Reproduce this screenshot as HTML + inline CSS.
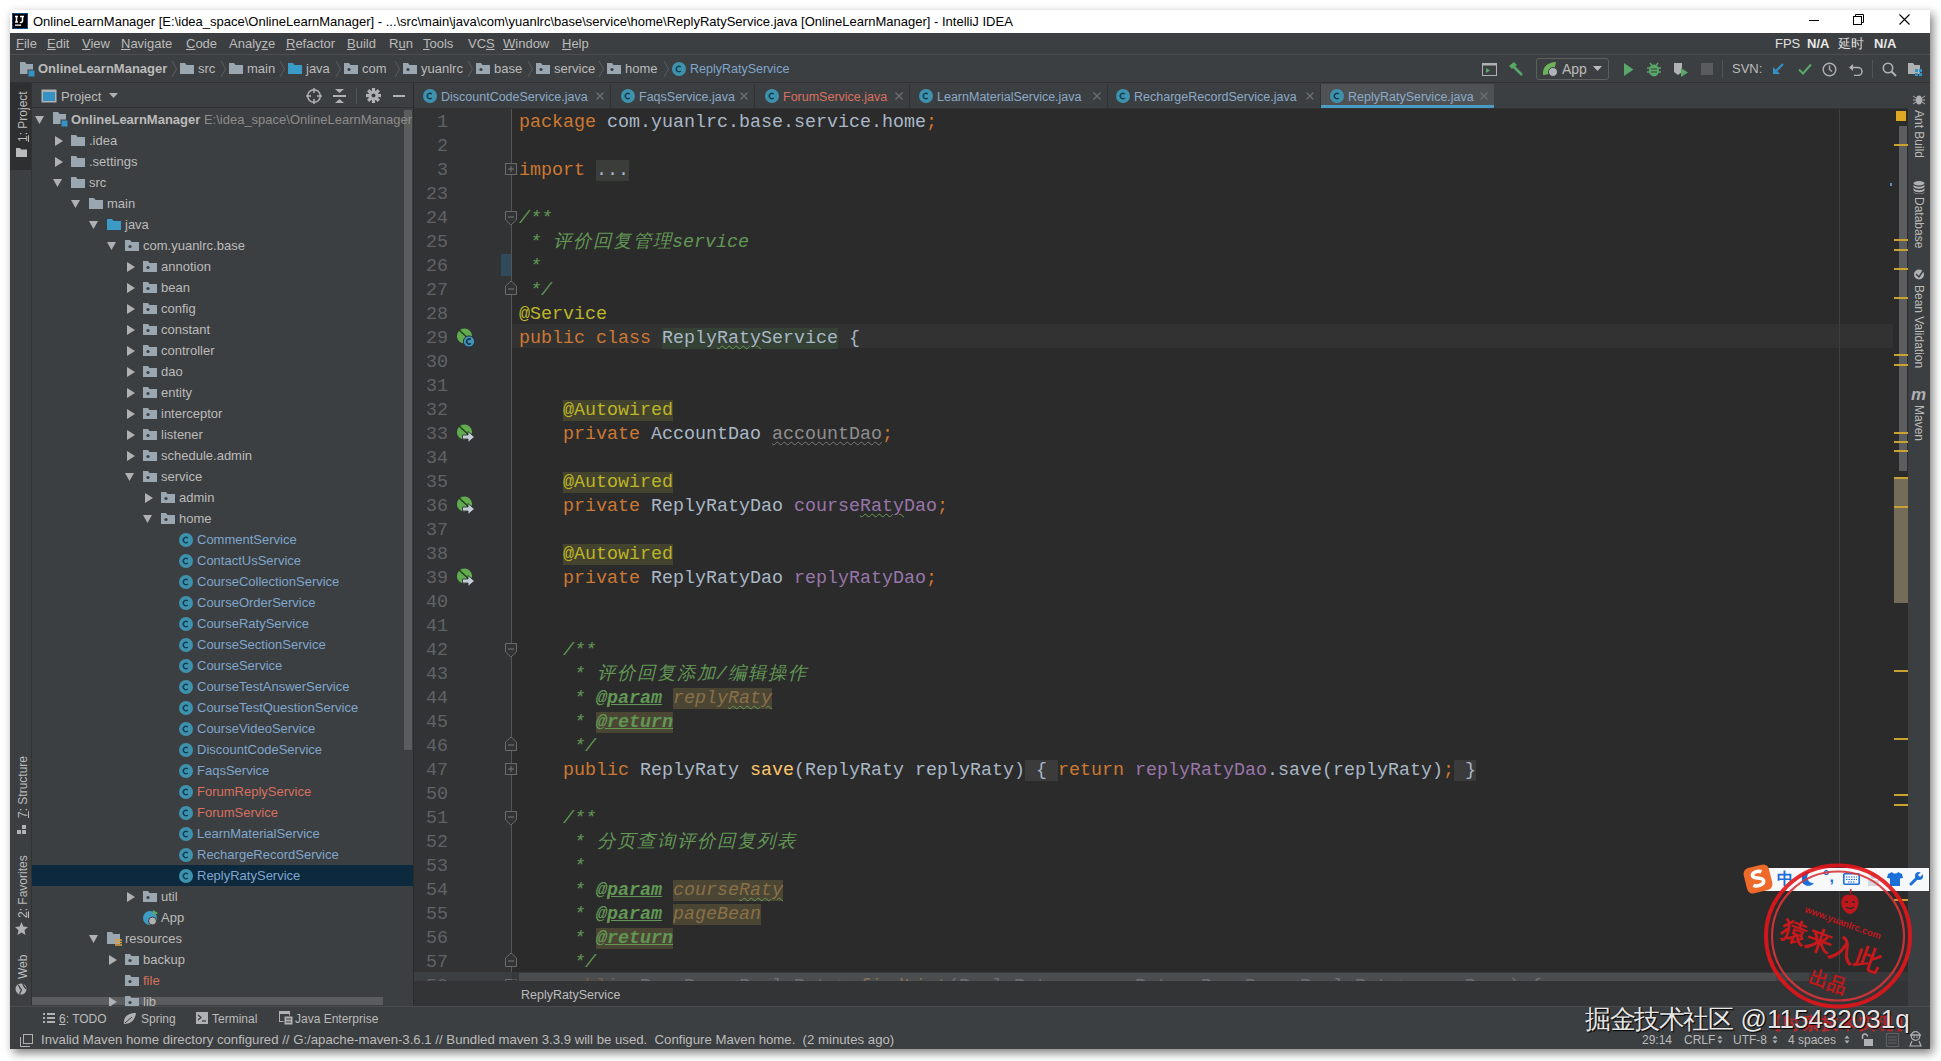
<!DOCTYPE html><html><head><meta charset="utf-8"><style>
*{margin:0;padding:0;box-sizing:border-box}
html,body{width:1941px;height:1061px;overflow:hidden;background:#fff;font-family:"Liberation Sans",sans-serif}
.a{position:absolute}
.t{position:absolute;white-space:pre;font-size:13px;line-height:16px;color:#bbbbbb}
.m{position:absolute;white-space:pre;font-family:"Liberation Mono",monospace;font-size:18.33px;line-height:24px;color:#a9b7c6}
.kw{color:#cc7832}.an{color:#bbb529}.fd{color:#9876aa}.dc{color:#629755;font-style:italic}.fn{color:#ffc66d}
.cj{display:inline-block;width:20px;text-align:center}
</style></head><body>
<div class="a" style="left:10px;top:10px;width:1920px;height:1039px;background:#3c3f41;box-shadow:3px 4px 9px rgba(0,0,0,0.5)"></div><div class="a" style="left:10px;top:10px;width:1920px;height:23px;background:#ffffff"></div><svg class="a" style="left:12px;top:13px" width="16" height="16"><rect x="0" y="0" width="16" height="16" fill="#0d4a8a"/><rect x="1" y="1" width="14" height="14" fill="#000"/><path d="M3 3.5H6M4.5 3.5V9M3 9H6M8 3.5H12M10.5 3.5V8A1.5 1.5 0 0 1 8 9" fill="none" stroke="#fff" stroke-width="1.5"/><rect x="3" y="11.5" width="6" height="1.3" fill="#fff"/></svg><div class="t" style="left:33px;top:14px;color:#000">OnlineLearnManager [E:\idea_space\OnlineLearnManager] - ...\src\main\java\com\yuanlrc\base\service\home\ReplyRatyService.java [OnlineLearnManager] - IntelliJ IDEA</div><div class="a" style="left:1809px;top:20px;width:10px;height:1px;background:#000"></div><svg class="a" style="left:1853px;top:14px" width="12" height="12"><rect x="0.5" y="2.5" width="8" height="8" fill="none" stroke="#000"/><path d="M2.5 2.5V0.5H10.5V8.5H8.5" fill="none" stroke="#000"/></svg><svg class="a" style="left:1899px;top:14px" width="12" height="12"><path d="M0.5 0.5L10.5 10.5M10.5 0.5L0.5 10.5" stroke="#000" stroke-width="1.1"/></svg><div class="a" style="left:10px;top:54px;width:1920px;height:1px;background:#4b4d4f"></div><div class="t" style="left:16px;top:36px"><u>F</u>ile</div><div class="t" style="left:47px;top:36px"><u>E</u>dit</div><div class="t" style="left:82px;top:36px"><u>V</u>iew</div><div class="t" style="left:121px;top:36px"><u>N</u>avigate</div><div class="t" style="left:186px;top:36px"><u>C</u>ode</div><div class="t" style="left:229px;top:36px">Analy<u>z</u>e</div><div class="t" style="left:286px;top:36px"><u>R</u>efactor</div><div class="t" style="left:347px;top:36px"><u>B</u>uild</div><div class="t" style="left:389px;top:36px">R<u>u</u>n</div><div class="t" style="left:423px;top:36px"><u>T</u>ools</div><div class="t" style="left:468px;top:36px">VC<u>S</u></div><div class="t" style="left:503px;top:36px"><u>W</u>indow</div><div class="t" style="left:562px;top:36px"><u>H</u>elp</div><div class="t" style="left:1775px;top:36px;color:#e0e0e0">FPS</div><div class="t" style="left:1807px;top:36px;color:#e8e8e8;font-weight:bold">N/A</div><div class="t" style="left:1838px;top:36px;color:#e0e0e0">延时</div><div class="t" style="left:1874px;top:36px;color:#e8e8e8;font-weight:bold">N/A</div><div class="a" style="left:10px;top:82px;width:1920px;height:1px;background:#323232"></div><svg class="a" style="left:20px;top:62px" width="16" height="15"><path d="M0 0H5L6.5 2H13V12H0Z" fill="#9aa7b0"/><rect x="8" y="8" width="7" height="7" fill="#3592c4" stroke="#3c3f41" stroke-width="1"/></svg><div class="t" style="left:38px;top:61px;font-weight:bold;color:#bbbbbb">OnlineLearnManager</div><svg class="a" style="left:171px;top:60px" width="7" height="18"><path d="M1 1L5.5 9L1 17" fill="none" stroke="#5a5d5f" stroke-width="1"/></svg><svg class="a" style="left:180px;top:63px" width="14" height="12"><path d="M0 0H5L6.5 2H14V11H0Z" fill="#9aa7b0"/></svg><div class="t" style="left:198px;top:61px">src</div><svg class="a" style="left:220px;top:60px" width="7" height="18"><path d="M1 1L5.5 9L1 17" fill="none" stroke="#5a5d5f" stroke-width="1"/></svg><svg class="a" style="left:229px;top:63px" width="14" height="12"><path d="M0 0H5L6.5 2H14V11H0Z" fill="#9aa7b0"/></svg><div class="t" style="left:247px;top:61px">main</div><svg class="a" style="left:279px;top:60px" width="7" height="18"><path d="M1 1L5.5 9L1 17" fill="none" stroke="#5a5d5f" stroke-width="1"/></svg><svg class="a" style="left:288px;top:63px" width="14" height="12"><path d="M0 0H5L6.5 2H14V11H0Z" fill="#3a9bc6"/></svg><div class="t" style="left:306px;top:61px">java</div><svg class="a" style="left:335px;top:60px" width="7" height="18"><path d="M1 1L5.5 9L1 17" fill="none" stroke="#5a5d5f" stroke-width="1"/></svg><svg class="a" style="left:344px;top:63px" width="14" height="12"><path d="M0 0H5L6.5 2H14V11H0Z" fill="#9aa7b0"/><circle cx="5" cy="6.5" r="1.6" fill="#3c3f41"/></svg><div class="t" style="left:362px;top:61px">com</div><svg class="a" style="left:394px;top:60px" width="7" height="18"><path d="M1 1L5.5 9L1 17" fill="none" stroke="#5a5d5f" stroke-width="1"/></svg><svg class="a" style="left:403px;top:63px" width="14" height="12"><path d="M0 0H5L6.5 2H14V11H0Z" fill="#9aa7b0"/><circle cx="5" cy="6.5" r="1.6" fill="#3c3f41"/></svg><div class="t" style="left:421px;top:61px">yuanlrc</div><svg class="a" style="left:467px;top:60px" width="7" height="18"><path d="M1 1L5.5 9L1 17" fill="none" stroke="#5a5d5f" stroke-width="1"/></svg><svg class="a" style="left:476px;top:63px" width="14" height="12"><path d="M0 0H5L6.5 2H14V11H0Z" fill="#9aa7b0"/><circle cx="5" cy="6.5" r="1.6" fill="#3c3f41"/></svg><div class="t" style="left:494px;top:61px">base</div><svg class="a" style="left:527px;top:60px" width="7" height="18"><path d="M1 1L5.5 9L1 17" fill="none" stroke="#5a5d5f" stroke-width="1"/></svg><svg class="a" style="left:536px;top:63px" width="14" height="12"><path d="M0 0H5L6.5 2H14V11H0Z" fill="#9aa7b0"/><circle cx="5" cy="6.5" r="1.6" fill="#3c3f41"/></svg><div class="t" style="left:554px;top:61px">service</div><svg class="a" style="left:598px;top:60px" width="7" height="18"><path d="M1 1L5.5 9L1 17" fill="none" stroke="#5a5d5f" stroke-width="1"/></svg><svg class="a" style="left:607px;top:63px" width="14" height="12"><path d="M0 0H5L6.5 2H14V11H0Z" fill="#9aa7b0"/><circle cx="5" cy="6.5" r="1.6" fill="#3c3f41"/></svg><div class="t" style="left:625px;top:61px">home</div><svg class="a" style="left:663px;top:60px" width="7" height="18"><path d="M1 1L5.5 9L1 17" fill="none" stroke="#5a5d5f" stroke-width="1"/></svg><svg class="a" style="left:672px;top:62px" width="14" height="14"><circle cx="7.0" cy="7.0" r="7.0" fill="#3f92ad"/><path d="M8.8 5.1A2.6 2.7 0 1 0 8.8 8.9" fill="none" stroke="#123f55" stroke-width="1.5"/></svg><div class="t" style="left:690px;top:61px;font-size:12.5px;color:#7fa6cc">ReplyRatyService</div><svg class="a" style="left:1482px;top:63px" width="15" height="13"><rect x="0.5" y="0.5" width="14" height="12" fill="none" stroke="#afb1b3"/><rect x="0.5" y="0.5" width="14" height="2" fill="#afb1b3"/><path d="M4 5L8 7.5L4 10Z" fill="#59a869"/></svg><svg class="a" style="left:1508px;top:62px" width="16" height="15"><path d="M1 4L6 0L9 3L4 7Z" fill="#59a869"/><path d="M6 5L14 13" stroke="#59a869" stroke-width="2.5"/></svg><div class="a" style="left:1536px;top:58px;width:73px;height:22px;border:1px solid #5e6060;border-radius:3px"></div><svg class="a" style="left:1542px;top:61px" width="20" height="16"><path d="M1 14C0 6 6 1 14 1C13 9 9 14 1 14Z" fill="#6db35a"/><circle cx="11" cy="11" r="4.5" fill="#aeb5b8" stroke="#3c3f41" stroke-width="1"/></svg><div class="t" style="left:1562px;top:61px;font-size:14px">App</div><svg class="a" style="left:1593px;top:66px" width="10" height="6"><path d="M0 0H9L4.5 5Z" fill="#bbbbbb"/></svg><svg class="a" style="left:1624px;top:63px" width="10" height="13"><path d="M0 0L9.5 6.5L0 13Z" fill="#59a869"/></svg><svg class="a" style="left:1647px;top:62px" width="14" height="15"><ellipse cx="7" cy="8.5" rx="5" ry="6" fill="#59a869"/><path d="M0 6H14M0 10H14M3 1L5 3.5M11 1L9 3.5" stroke="#59a869" stroke-width="1.5"/><path d="M4 7H10M4 10H10" stroke="#3c3f41" stroke-width="1.2"/></svg><svg class="a" style="left:1673px;top:62px" width="16" height="15"><path d="M1 1H9V10L5 13L1 10Z" fill="#afb1b3"/><path d="M8 6L15 10.5L8 15Z" fill="#59a869"/></svg><div class="a" style="left:1701px;top:63px;width:12px;height:12px;background:#595b5d"></div><div class="a" style="left:1722px;top:60px;width:1px;height:18px;background:#515354"></div><div class="t" style="left:1732px;top:61px">SVN:</div><svg class="a" style="left:1772px;top:63px" width="12" height="13"><path d="M11 1L3 9" stroke="#3592c4" stroke-width="2"/><path d="M1 4V11H8Z" fill="#3592c4"/></svg><svg class="a" style="left:1798px;top:63px" width="14" height="12"><path d="M1 6.5L5 10.5L13 1.5" fill="none" stroke="#59a869" stroke-width="2"/></svg><svg class="a" style="left:1822px;top:62px" width="15" height="15"><circle cx="7.5" cy="7.5" r="6.3" fill="none" stroke="#afb1b3" stroke-width="1.4"/><path d="M7.5 3.5V7.5L10 9.5" fill="none" stroke="#afb1b3" stroke-width="1.4"/></svg><svg class="a" style="left:1849px;top:62px" width="14" height="14"><path d="M3 5.5H9A4 4 0 0 1 9 13.5H5" fill="none" stroke="#afb1b3" stroke-width="1.5"/><path d="M0 5.5L4 2V9Z" fill="#afb1b3"/></svg><div class="a" style="left:1872px;top:60px;width:1px;height:18px;background:#515354"></div><svg class="a" style="left:1882px;top:62px" width="15" height="15"><circle cx="6" cy="6" r="4.7" fill="none" stroke="#afb1b3" stroke-width="1.6"/><path d="M9.5 9.5L14 14" stroke="#afb1b3" stroke-width="2"/></svg><svg class="a" style="left:1908px;top:63px" width="15" height="13"><path d="M0 0H5L6.5 2H12V11H0Z" fill="#afb1b3"/><rect x="7" y="6" width="3" height="3" fill="#3592c4"/><rect x="11" y="6" width="3" height="3" fill="#3592c4"/><rect x="7" y="10" width="3" height="3" fill="#3592c4"/><rect x="11" y="10" width="3" height="3" fill="#3592c4"/></svg><div class="a" style="left:10px;top:83px;width:21px;height:923px;background:#3c3f41"></div><div class="a" style="left:31px;top:83px;width:1px;height:923px;background:#323232"></div><div class="a" style="left:10px;top:83px;width:21px;height:87px;background:#2d2f30"></div><div class="t" style="left:16px;top:142px;font-size:12px;line-height:14px;color:#bbbbbb;transform-origin:0 0;transform:rotate(-90deg)"><u>1</u>: Project</div><svg class="a" style="left:16px;top:148px" width="11" height="9"><path d="M0 0H4L5 1.5H11V9H0Z" fill="#bbbbbb"/></svg><div class="t" style="left:16px;top:818px;font-size:12px;line-height:14px;color:#bbbbbb;transform-origin:0 0;transform:rotate(-90deg)"><u>7</u>: Structure</div><svg class="a" style="left:17px;top:825px" width="9" height="9"><rect x="0" y="5" width="4" height="4" fill="#afb1b3"/><rect x="5" y="5" width="4" height="4" fill="#afb1b3"/><rect x="5" y="0" width="4" height="4" fill="#afb1b3"/></svg><div class="t" style="left:16px;top:918px;font-size:12px;line-height:14px;color:#bbbbbb;transform-origin:0 0;transform:rotate(-90deg)"><u>2</u>: Favorites</div><svg class="a" style="left:15px;top:922px" width="13" height="13"><path d="M6.5 0L8.4 4.6L13 5L9.5 8.2L10.5 13L6.5 10.5L2.5 13L3.5 8.2L0 5L4.6 4.6Z" fill="#afb1b3"/></svg><div class="t" style="left:16px;top:979px;font-size:12px;line-height:14px;color:#bbbbbb;transform-origin:0 0;transform:rotate(-90deg)">Web</div><svg class="a" style="left:15px;top:983px" width="12" height="12"><circle cx="6" cy="6" r="5.5" fill="#afb1b3"/><path d="M3 2C5 3 4 5 6 6S4 9 5 11M8 1C8 3 10 4 11 6" stroke="#3c3f41" stroke-width="1.3" fill="none"/></svg><div class="a" style="left:32px;top:83px;width:381px;height:923px;background:#3c3f41"></div><div class="a" style="left:32px;top:107px;width:381px;height:1px;background:#323232"></div><svg class="a" style="left:41px;top:89px" width="16" height="14"><rect x="0.5" y="0.5" width="15" height="13" fill="#afb1b3"/><rect x="2" y="3" width="12" height="9" fill="#3592c4"/></svg><div class="t" style="left:61px;top:89px">Project</div><svg class="a" style="left:109px;top:93px" width="10" height="6"><path d="M0 0H9L4.5 5Z" fill="#afb1b3"/></svg><svg class="a" style="left:306px;top:88px" width="16" height="16"><circle cx="8" cy="8" r="6.3" fill="none" stroke="#afb1b3" stroke-width="1.5"/><path d="M8 0V5M8 11V16M0 8H5M11 8H16" stroke="#afb1b3" stroke-width="1.5"/></svg><svg class="a" style="left:333px;top:89px" width="13" height="14"><path d="M2 0H11L6.5 4Z M2 14H11L6.5 10Z" fill="#afb1b3"/><rect x="0" y="6" width="13" height="2" fill="#afb1b3"/></svg><div class="a" style="left:356px;top:88px;width:1px;height:16px;background:#515354"></div><svg class="a" style="left:366px;top:88px" width="15" height="15"><g transform="translate(7.5 7.5)"><circle r="5" fill="#afb1b3"/><rect x="-1.6" y="-7.5" width="3.2" height="4" fill="#afb1b3" transform="rotate(0)"/><rect x="-1.6" y="-7.5" width="3.2" height="4" fill="#afb1b3" transform="rotate(45)"/><rect x="-1.6" y="-7.5" width="3.2" height="4" fill="#afb1b3" transform="rotate(90)"/><rect x="-1.6" y="-7.5" width="3.2" height="4" fill="#afb1b3" transform="rotate(135)"/><rect x="-1.6" y="-7.5" width="3.2" height="4" fill="#afb1b3" transform="rotate(180)"/><rect x="-1.6" y="-7.5" width="3.2" height="4" fill="#afb1b3" transform="rotate(225)"/><rect x="-1.6" y="-7.5" width="3.2" height="4" fill="#afb1b3" transform="rotate(270)"/><rect x="-1.6" y="-7.5" width="3.2" height="4" fill="#afb1b3" transform="rotate(315)"/><circle r="2" fill="#3c3f41"/></g></svg><div class="a" style="left:393px;top:95px;width:12px;height:2px;background:#afb1b3"></div><div class="a" style="left:404px;top:110px;width:8px;height:640px;background:#5a5c5e;border-radius:1px"></div><div class="a" style="left:32px;top:997px;width:351px;height:8px;background:#5a5c5e"></div><svg class="a" style="left:35px;top:116px" width="10" height="9"><path d="M0 0H9L4.5 8Z" fill="#afb1b3"/></svg><svg class="a" style="left:53px;top:112px" width="16" height="15"><path d="M0 0H5L6.5 2H13V12H0Z" fill="#9aa7b0"/><rect x="8" y="8" width="7" height="7" fill="#3592c4" stroke="#3c3f41" stroke-width="1"/></svg><div class="t" style="left:71px;top:112px;font-weight:bold">OnlineLearnManager <span style="font-weight:normal;color:#8c8c8c">E:\idea_space\OnlineLearnManager</span></div><svg class="a" style="left:55px;top:136px" width="9" height="10"><path d="M0 0V10L8 5Z" fill="#afb1b3"/></svg><svg class="a" style="left:71px;top:135px" width="14" height="12"><path d="M0 0H5L6.5 2H14V11H0Z" fill="#9aa7b0"/></svg><div class="t" style="left:89px;top:133px;color:#bbbbbb">.idea</div><svg class="a" style="left:55px;top:157px" width="9" height="10"><path d="M0 0V10L8 5Z" fill="#afb1b3"/></svg><svg class="a" style="left:71px;top:156px" width="14" height="12"><path d="M0 0H5L6.5 2H14V11H0Z" fill="#9aa7b0"/></svg><div class="t" style="left:89px;top:154px;color:#bbbbbb">.settings</div><svg class="a" style="left:53px;top:179px" width="10" height="9"><path d="M0 0H9L4.5 8Z" fill="#afb1b3"/></svg><svg class="a" style="left:71px;top:177px" width="14" height="12"><path d="M0 0H5L6.5 2H14V11H0Z" fill="#9aa7b0"/></svg><div class="t" style="left:89px;top:175px;color:#bbbbbb">src</div><svg class="a" style="left:71px;top:200px" width="10" height="9"><path d="M0 0H9L4.5 8Z" fill="#afb1b3"/></svg><svg class="a" style="left:89px;top:198px" width="14" height="12"><path d="M0 0H5L6.5 2H14V11H0Z" fill="#9aa7b0"/></svg><div class="t" style="left:107px;top:196px;color:#bbbbbb">main</div><svg class="a" style="left:89px;top:221px" width="10" height="9"><path d="M0 0H9L4.5 8Z" fill="#afb1b3"/></svg><svg class="a" style="left:107px;top:219px" width="14" height="12"><path d="M0 0H5L6.5 2H14V11H0Z" fill="#3a9bc6"/></svg><div class="t" style="left:125px;top:217px;color:#bbbbbb">java</div><svg class="a" style="left:107px;top:242px" width="10" height="9"><path d="M0 0H9L4.5 8Z" fill="#afb1b3"/></svg><svg class="a" style="left:125px;top:240px" width="14" height="12"><path d="M0 0H5L6.5 2H14V11H0Z" fill="#9aa7b0"/><circle cx="5" cy="6.5" r="1.6" fill="#3c3f41"/></svg><div class="t" style="left:143px;top:238px;color:#bbbbbb">com.yuanlrc.base</div><svg class="a" style="left:127px;top:262px" width="9" height="10"><path d="M0 0V10L8 5Z" fill="#afb1b3"/></svg><svg class="a" style="left:143px;top:261px" width="14" height="12"><path d="M0 0H5L6.5 2H14V11H0Z" fill="#9aa7b0"/><circle cx="5" cy="6.5" r="1.6" fill="#3c3f41"/></svg><div class="t" style="left:161px;top:259px;color:#bbbbbb">annotion</div><svg class="a" style="left:127px;top:283px" width="9" height="10"><path d="M0 0V10L8 5Z" fill="#afb1b3"/></svg><svg class="a" style="left:143px;top:282px" width="14" height="12"><path d="M0 0H5L6.5 2H14V11H0Z" fill="#9aa7b0"/><circle cx="5" cy="6.5" r="1.6" fill="#3c3f41"/></svg><div class="t" style="left:161px;top:280px;color:#bbbbbb">bean</div><svg class="a" style="left:127px;top:304px" width="9" height="10"><path d="M0 0V10L8 5Z" fill="#afb1b3"/></svg><svg class="a" style="left:143px;top:303px" width="14" height="12"><path d="M0 0H5L6.5 2H14V11H0Z" fill="#9aa7b0"/><circle cx="5" cy="6.5" r="1.6" fill="#3c3f41"/></svg><div class="t" style="left:161px;top:301px;color:#bbbbbb">config</div><svg class="a" style="left:127px;top:325px" width="9" height="10"><path d="M0 0V10L8 5Z" fill="#afb1b3"/></svg><svg class="a" style="left:143px;top:324px" width="14" height="12"><path d="M0 0H5L6.5 2H14V11H0Z" fill="#9aa7b0"/><circle cx="5" cy="6.5" r="1.6" fill="#3c3f41"/></svg><div class="t" style="left:161px;top:322px;color:#bbbbbb">constant</div><svg class="a" style="left:127px;top:346px" width="9" height="10"><path d="M0 0V10L8 5Z" fill="#afb1b3"/></svg><svg class="a" style="left:143px;top:345px" width="14" height="12"><path d="M0 0H5L6.5 2H14V11H0Z" fill="#9aa7b0"/><circle cx="5" cy="6.5" r="1.6" fill="#3c3f41"/></svg><div class="t" style="left:161px;top:343px;color:#bbbbbb">controller</div><svg class="a" style="left:127px;top:367px" width="9" height="10"><path d="M0 0V10L8 5Z" fill="#afb1b3"/></svg><svg class="a" style="left:143px;top:366px" width="14" height="12"><path d="M0 0H5L6.5 2H14V11H0Z" fill="#9aa7b0"/><circle cx="5" cy="6.5" r="1.6" fill="#3c3f41"/></svg><div class="t" style="left:161px;top:364px;color:#bbbbbb">dao</div><svg class="a" style="left:127px;top:388px" width="9" height="10"><path d="M0 0V10L8 5Z" fill="#afb1b3"/></svg><svg class="a" style="left:143px;top:387px" width="14" height="12"><path d="M0 0H5L6.5 2H14V11H0Z" fill="#9aa7b0"/><circle cx="5" cy="6.5" r="1.6" fill="#3c3f41"/></svg><div class="t" style="left:161px;top:385px;color:#bbbbbb">entity</div><svg class="a" style="left:127px;top:409px" width="9" height="10"><path d="M0 0V10L8 5Z" fill="#afb1b3"/></svg><svg class="a" style="left:143px;top:408px" width="14" height="12"><path d="M0 0H5L6.5 2H14V11H0Z" fill="#9aa7b0"/><circle cx="5" cy="6.5" r="1.6" fill="#3c3f41"/></svg><div class="t" style="left:161px;top:406px;color:#bbbbbb">interceptor</div><svg class="a" style="left:127px;top:430px" width="9" height="10"><path d="M0 0V10L8 5Z" fill="#afb1b3"/></svg><svg class="a" style="left:143px;top:429px" width="14" height="12"><path d="M0 0H5L6.5 2H14V11H0Z" fill="#9aa7b0"/><circle cx="5" cy="6.5" r="1.6" fill="#3c3f41"/></svg><div class="t" style="left:161px;top:427px;color:#bbbbbb">listener</div><svg class="a" style="left:127px;top:451px" width="9" height="10"><path d="M0 0V10L8 5Z" fill="#afb1b3"/></svg><svg class="a" style="left:143px;top:450px" width="14" height="12"><path d="M0 0H5L6.5 2H14V11H0Z" fill="#9aa7b0"/><circle cx="5" cy="6.5" r="1.6" fill="#3c3f41"/></svg><div class="t" style="left:161px;top:448px;color:#bbbbbb">schedule.admin</div><svg class="a" style="left:125px;top:473px" width="10" height="9"><path d="M0 0H9L4.5 8Z" fill="#afb1b3"/></svg><svg class="a" style="left:143px;top:471px" width="14" height="12"><path d="M0 0H5L6.5 2H14V11H0Z" fill="#9aa7b0"/><circle cx="5" cy="6.5" r="1.6" fill="#3c3f41"/></svg><div class="t" style="left:161px;top:469px;color:#bbbbbb">service</div><svg class="a" style="left:145px;top:493px" width="9" height="10"><path d="M0 0V10L8 5Z" fill="#afb1b3"/></svg><svg class="a" style="left:161px;top:492px" width="14" height="12"><path d="M0 0H5L6.5 2H14V11H0Z" fill="#9aa7b0"/><circle cx="5" cy="6.5" r="1.6" fill="#3c3f41"/></svg><div class="t" style="left:179px;top:490px;color:#bbbbbb">admin</div><svg class="a" style="left:143px;top:515px" width="10" height="9"><path d="M0 0H9L4.5 8Z" fill="#afb1b3"/></svg><svg class="a" style="left:161px;top:513px" width="14" height="12"><path d="M0 0H5L6.5 2H14V11H0Z" fill="#9aa7b0"/><circle cx="5" cy="6.5" r="1.6" fill="#3c3f41"/></svg><div class="t" style="left:179px;top:511px;color:#bbbbbb">home</div><svg class="a" style="left:179px;top:533px" width="14" height="14"><circle cx="7.0" cy="7.0" r="7.0" fill="#3f92ad"/><path d="M8.8 5.1A2.6 2.7 0 1 0 8.8 8.9" fill="none" stroke="#123f55" stroke-width="1.5"/></svg><div class="t" style="left:197px;top:532px;color:#7fa6cc">CommentService</div><svg class="a" style="left:179px;top:554px" width="14" height="14"><circle cx="7.0" cy="7.0" r="7.0" fill="#3f92ad"/><path d="M8.8 5.1A2.6 2.7 0 1 0 8.8 8.9" fill="none" stroke="#123f55" stroke-width="1.5"/></svg><div class="t" style="left:197px;top:553px;color:#7fa6cc">ContactUsService</div><svg class="a" style="left:179px;top:575px" width="14" height="14"><circle cx="7.0" cy="7.0" r="7.0" fill="#3f92ad"/><path d="M8.8 5.1A2.6 2.7 0 1 0 8.8 8.9" fill="none" stroke="#123f55" stroke-width="1.5"/></svg><div class="t" style="left:197px;top:574px;color:#7fa6cc">CourseCollectionService</div><svg class="a" style="left:179px;top:596px" width="14" height="14"><circle cx="7.0" cy="7.0" r="7.0" fill="#3f92ad"/><path d="M8.8 5.1A2.6 2.7 0 1 0 8.8 8.9" fill="none" stroke="#123f55" stroke-width="1.5"/></svg><div class="t" style="left:197px;top:595px;color:#7fa6cc">CourseOrderService</div><svg class="a" style="left:179px;top:617px" width="14" height="14"><circle cx="7.0" cy="7.0" r="7.0" fill="#3f92ad"/><path d="M8.8 5.1A2.6 2.7 0 1 0 8.8 8.9" fill="none" stroke="#123f55" stroke-width="1.5"/></svg><div class="t" style="left:197px;top:616px;color:#7fa6cc">CourseRatyService</div><svg class="a" style="left:179px;top:638px" width="14" height="14"><circle cx="7.0" cy="7.0" r="7.0" fill="#3f92ad"/><path d="M8.8 5.1A2.6 2.7 0 1 0 8.8 8.9" fill="none" stroke="#123f55" stroke-width="1.5"/></svg><div class="t" style="left:197px;top:637px;color:#7fa6cc">CourseSectionService</div><svg class="a" style="left:179px;top:659px" width="14" height="14"><circle cx="7.0" cy="7.0" r="7.0" fill="#3f92ad"/><path d="M8.8 5.1A2.6 2.7 0 1 0 8.8 8.9" fill="none" stroke="#123f55" stroke-width="1.5"/></svg><div class="t" style="left:197px;top:658px;color:#7fa6cc">CourseService</div><svg class="a" style="left:179px;top:680px" width="14" height="14"><circle cx="7.0" cy="7.0" r="7.0" fill="#3f92ad"/><path d="M8.8 5.1A2.6 2.7 0 1 0 8.8 8.9" fill="none" stroke="#123f55" stroke-width="1.5"/></svg><div class="t" style="left:197px;top:679px;color:#7fa6cc">CourseTestAnswerService</div><svg class="a" style="left:179px;top:701px" width="14" height="14"><circle cx="7.0" cy="7.0" r="7.0" fill="#3f92ad"/><path d="M8.8 5.1A2.6 2.7 0 1 0 8.8 8.9" fill="none" stroke="#123f55" stroke-width="1.5"/></svg><div class="t" style="left:197px;top:700px;color:#7fa6cc">CourseTestQuestionService</div><svg class="a" style="left:179px;top:722px" width="14" height="14"><circle cx="7.0" cy="7.0" r="7.0" fill="#3f92ad"/><path d="M8.8 5.1A2.6 2.7 0 1 0 8.8 8.9" fill="none" stroke="#123f55" stroke-width="1.5"/></svg><div class="t" style="left:197px;top:721px;color:#7fa6cc">CourseVideoService</div><svg class="a" style="left:179px;top:743px" width="14" height="14"><circle cx="7.0" cy="7.0" r="7.0" fill="#3f92ad"/><path d="M8.8 5.1A2.6 2.7 0 1 0 8.8 8.9" fill="none" stroke="#123f55" stroke-width="1.5"/></svg><div class="t" style="left:197px;top:742px;color:#7fa6cc">DiscountCodeService</div><svg class="a" style="left:179px;top:764px" width="14" height="14"><circle cx="7.0" cy="7.0" r="7.0" fill="#3f92ad"/><path d="M8.8 5.1A2.6 2.7 0 1 0 8.8 8.9" fill="none" stroke="#123f55" stroke-width="1.5"/></svg><div class="t" style="left:197px;top:763px;color:#7fa6cc">FaqsService</div><svg class="a" style="left:179px;top:785px" width="14" height="14"><circle cx="7.0" cy="7.0" r="7.0" fill="#3f92ad"/><path d="M8.8 5.1A2.6 2.7 0 1 0 8.8 8.9" fill="none" stroke="#123f55" stroke-width="1.5"/></svg><div class="t" style="left:197px;top:784px;color:#d8705f">ForumReplyService</div><svg class="a" style="left:179px;top:806px" width="14" height="14"><circle cx="7.0" cy="7.0" r="7.0" fill="#3f92ad"/><path d="M8.8 5.1A2.6 2.7 0 1 0 8.8 8.9" fill="none" stroke="#123f55" stroke-width="1.5"/></svg><div class="t" style="left:197px;top:805px;color:#d8705f">ForumService</div><svg class="a" style="left:179px;top:827px" width="14" height="14"><circle cx="7.0" cy="7.0" r="7.0" fill="#3f92ad"/><path d="M8.8 5.1A2.6 2.7 0 1 0 8.8 8.9" fill="none" stroke="#123f55" stroke-width="1.5"/></svg><div class="t" style="left:197px;top:826px;color:#7fa6cc">LearnMaterialService</div><svg class="a" style="left:179px;top:848px" width="14" height="14"><circle cx="7.0" cy="7.0" r="7.0" fill="#3f92ad"/><path d="M8.8 5.1A2.6 2.7 0 1 0 8.8 8.9" fill="none" stroke="#123f55" stroke-width="1.5"/></svg><div class="t" style="left:197px;top:847px;color:#7fa6cc">RechargeRecordService</div><div class="a" style="left:32px;top:864.5px;width:381px;height:21px;background:#0d293e"></div><svg class="a" style="left:179px;top:869px" width="14" height="14"><circle cx="7.0" cy="7.0" r="7.0" fill="#3f92ad"/><path d="M8.8 5.1A2.6 2.7 0 1 0 8.8 8.9" fill="none" stroke="#123f55" stroke-width="1.5"/></svg><div class="t" style="left:197px;top:868px;color:#7fa6cc">ReplyRatyService</div><svg class="a" style="left:127px;top:892px" width="9" height="10"><path d="M0 0V10L8 5Z" fill="#afb1b3"/></svg><svg class="a" style="left:143px;top:891px" width="14" height="12"><path d="M0 0H5L6.5 2H14V11H0Z" fill="#9aa7b0"/><circle cx="5" cy="6.5" r="1.6" fill="#3c3f41"/></svg><div class="t" style="left:161px;top:889px;color:#bbbbbb">util</div><svg class="a" style="left:143px;top:910px" width="16" height="16"><circle cx="7" cy="8" r="7" fill="#3d9bc4"/><path d="M10 0L15 3L10 6Z" fill="#59a869"/><circle cx="9.5" cy="11" r="4" fill="#afb1b3" stroke="#3c3f41"/></svg><div class="t" style="left:161px;top:910px;color:#bbbbbb">App</div><svg class="a" style="left:89px;top:935px" width="10" height="9"><path d="M0 0H9L4.5 8Z" fill="#afb1b3"/></svg><svg class="a" style="left:107px;top:932px" width="16" height="15"><path d="M0 0H5L6.5 2H13V12H0Z" fill="#9aa7b0"/><path d="M8 8H15M8 10.5H15M8 13H15" stroke="#d9a343" stroke-width="1.5"/></svg><div class="t" style="left:125px;top:931px;color:#bbbbbb">resources</div><svg class="a" style="left:109px;top:955px" width="9" height="10"><path d="M0 0V10L8 5Z" fill="#afb1b3"/></svg><svg class="a" style="left:125px;top:954px" width="14" height="12"><path d="M0 0H5L6.5 2H14V11H0Z" fill="#9aa7b0"/><circle cx="5" cy="6.5" r="1.6" fill="#3c3f41"/></svg><div class="t" style="left:143px;top:952px;color:#bbbbbb">backup</div><svg class="a" style="left:125px;top:975px" width="14" height="12"><path d="M0 0H5L6.5 2H14V11H0Z" fill="#9aa7b0"/><circle cx="5" cy="6.5" r="1.6" fill="#3c3f41"/></svg><div class="t" style="left:143px;top:973px;color:#d8705f">file</div><svg class="a" style="left:109px;top:997px" width="9" height="10"><path d="M0 0V10L8 5Z" fill="#afb1b3"/></svg><svg class="a" style="left:125px;top:996px" width="14" height="12"><path d="M0 0H5L6.5 2H14V11H0Z" fill="#9aa7b0"/><circle cx="5" cy="6.5" r="1.6" fill="#3c3f41"/></svg><div class="t" style="left:143px;top:994px;color:#bbbbbb">lib</div><div class="a" style="left:413px;top:83px;width:1495px;height:26px;background:#3c3f41"></div><div class="a" style="left:413px;top:83px;width:1px;height:923px;background:#2b2b2b"></div><div class="a" style="left:413px;top:108px;width:1495px;height:1px;background:#323232"></div><svg class="a" style="left:423px;top:89px" width="14" height="14"><circle cx="7.0" cy="7.0" r="7.0" fill="#3f92ad"/><path d="M8.8 5.1A2.6 2.7 0 1 0 8.8 8.9" fill="none" stroke="#123f55" stroke-width="1.5"/></svg><div class="t" style="left:441px;top:89px;font-size:12.5px;color:#8aaac8">DiscountCodeService.java</div><svg class="a" style="left:596px;top:92px" width="8" height="8"><path d="M0.5 0.5L7.5 7.5M7.5 0.5L0.5 7.5" stroke="#6e7072" stroke-width="1.2"/></svg><div class="a" style="left:610px;top:84px;width:1px;height:24px;background:#323232"></div><svg class="a" style="left:621px;top:89px" width="14" height="14"><circle cx="7.0" cy="7.0" r="7.0" fill="#3f92ad"/><path d="M8.8 5.1A2.6 2.7 0 1 0 8.8 8.9" fill="none" stroke="#123f55" stroke-width="1.5"/></svg><div class="t" style="left:639px;top:89px;font-size:12.5px;color:#8aaac8">FaqsService.java</div><svg class="a" style="left:740px;top:92px" width="8" height="8"><path d="M0.5 0.5L7.5 7.5M7.5 0.5L0.5 7.5" stroke="#6e7072" stroke-width="1.2"/></svg><div class="a" style="left:754px;top:84px;width:1px;height:24px;background:#323232"></div><svg class="a" style="left:765px;top:89px" width="14" height="14"><circle cx="7.0" cy="7.0" r="7.0" fill="#3f92ad"/><path d="M8.8 5.1A2.6 2.7 0 1 0 8.8 8.9" fill="none" stroke="#123f55" stroke-width="1.5"/></svg><div class="t" style="left:783px;top:89px;font-size:12.5px;color:#d8705f">ForumService.java</div><svg class="a" style="left:895px;top:92px" width="8" height="8"><path d="M0.5 0.5L7.5 7.5M7.5 0.5L0.5 7.5" stroke="#6e7072" stroke-width="1.2"/></svg><div class="a" style="left:909px;top:84px;width:1px;height:24px;background:#323232"></div><svg class="a" style="left:919px;top:89px" width="14" height="14"><circle cx="7.0" cy="7.0" r="7.0" fill="#3f92ad"/><path d="M8.8 5.1A2.6 2.7 0 1 0 8.8 8.9" fill="none" stroke="#123f55" stroke-width="1.5"/></svg><div class="t" style="left:937px;top:89px;font-size:12.5px;color:#8aaac8">LearnMaterialService.java</div><svg class="a" style="left:1093px;top:92px" width="8" height="8"><path d="M0.5 0.5L7.5 7.5M7.5 0.5L0.5 7.5" stroke="#6e7072" stroke-width="1.2"/></svg><div class="a" style="left:1107px;top:84px;width:1px;height:24px;background:#323232"></div><svg class="a" style="left:1116px;top:89px" width="14" height="14"><circle cx="7.0" cy="7.0" r="7.0" fill="#3f92ad"/><path d="M8.8 5.1A2.6 2.7 0 1 0 8.8 8.9" fill="none" stroke="#123f55" stroke-width="1.5"/></svg><div class="t" style="left:1134px;top:89px;font-size:12.5px;color:#8aaac8">RechargeRecordService.java</div><svg class="a" style="left:1306px;top:92px" width="8" height="8"><path d="M0.5 0.5L7.5 7.5M7.5 0.5L0.5 7.5" stroke="#6e7072" stroke-width="1.2"/></svg><div class="a" style="left:1320px;top:84px;width:1px;height:24px;background:#323232"></div><div class="a" style="left:1321px;top:84px;width:173px;height:24px;background:#4e5254"></div><div class="a" style="left:1321px;top:105px;width:173px;height:3px;background:#4a9ac4"></div><svg class="a" style="left:1330px;top:89px" width="14" height="14"><circle cx="7.0" cy="7.0" r="7.0" fill="#3f92ad"/><path d="M8.8 5.1A2.6 2.7 0 1 0 8.8 8.9" fill="none" stroke="#123f55" stroke-width="1.5"/></svg><div class="t" style="left:1348px;top:89px;font-size:12.5px;color:#8aaac8">ReplyRatyService.java</div><svg class="a" style="left:1480px;top:92px" width="8" height="8"><path d="M0.5 0.5L7.5 7.5M7.5 0.5L0.5 7.5" stroke="#6e7072" stroke-width="1.2"/></svg><div class="a" style="left:414px;top:109px;width:97px;height:863px;background:#313335"></div><div class="a" style="left:511px;top:109px;width:1px;height:863px;background:#555555"></div><div class="a" style="left:512px;top:109px;width:1396px;height:863px;background:#2b2b2b"></div><div class="a" style="left:512px;top:324px;width:1381px;height:24px;background:#323232"></div><div class="a" style="left:1839px;top:109px;width:1px;height:863px;background:#3f3f3f"></div><div class="a" style="left:414px;top:109px;width:1494px;height:872px;overflow:hidden"><div class="m" style="left:0px;top:2px;width:34px;text-align:right;color:#606366">1</div><div class="m" style="left:105px;top:2px"><span class="kw">package</span> com.yuanlrc.base.service.home<span class="kw">;</span></div><div class="m" style="left:0px;top:26px;width:34px;text-align:right;color:#606366">2</div><div class="m" style="left:0px;top:50px;width:34px;text-align:right;color:#606366">3</div><div class="m" style="left:105px;top:50px"><span class="kw">import</span> <span style="background:#3b3d3b;color:#a9b7c6">...</span></div><div class="m" style="left:0px;top:74px;width:34px;text-align:right;color:#606366">23</div><div class="m" style="left:0px;top:98px;width:34px;text-align:right;color:#606366">24</div><div class="m" style="left:105px;top:98px"><span class="dc">/**</span></div><div class="m" style="left:0px;top:122px;width:34px;text-align:right;color:#606366">25</div><div class="m" style="left:105px;top:122px"><span class="dc"> * </span><span class="dc"><span class="cj">评</span><span class="cj">价</span><span class="cj">回</span><span class="cj">复</span><span class="cj">管</span><span class="cj">理</span></span><span class="dc">service</span></div><div class="m" style="left:0px;top:146px;width:34px;text-align:right;color:#606366">26</div><div class="m" style="left:105px;top:146px"><span class="dc"> *</span></div><div class="m" style="left:0px;top:170px;width:34px;text-align:right;color:#606366">27</div><div class="m" style="left:105px;top:170px"><span class="dc"> */</span></div><div class="m" style="left:0px;top:194px;width:34px;text-align:right;color:#606366">28</div><div class="m" style="left:105px;top:194px"><span class="an">@Service</span></div><div class="m" style="left:0px;top:218px;width:34px;text-align:right;color:#606366">29</div><div class="m" style="left:105px;top:218px"><span class="kw">public class </span><span style="background:#344134">Reply<span style="text-decoration:underline wavy #6a9a55;text-decoration-thickness:1px;text-underline-offset:2px">Raty</span>Service</span> {</div><div class="m" style="left:0px;top:242px;width:34px;text-align:right;color:#606366">30</div><div class="m" style="left:0px;top:266px;width:34px;text-align:right;color:#606366">31</div><div class="m" style="left:0px;top:290px;width:34px;text-align:right;color:#606366">32</div><div class="m" style="left:105px;top:290px">    <span class="an" style="background:#44432d">@Autowired</span></div><div class="m" style="left:0px;top:314px;width:34px;text-align:right;color:#606366">33</div><div class="m" style="left:105px;top:314px">    <span class="kw">private </span>AccountDao <span style="color:#8e8e8e;text-decoration:underline wavy #7a7a7a;text-decoration-thickness:1px;text-underline-offset:2px">accountDao</span><span class="kw">;</span></div><div class="m" style="left:0px;top:338px;width:34px;text-align:right;color:#606366">34</div><div class="m" style="left:0px;top:362px;width:34px;text-align:right;color:#606366">35</div><div class="m" style="left:105px;top:362px">    <span class="an" style="background:#44432d">@Autowired</span></div><div class="m" style="left:0px;top:386px;width:34px;text-align:right;color:#606366">36</div><div class="m" style="left:105px;top:386px">    <span class="kw">private </span>ReplyRatyDao <span class="fd">course<span style="text-decoration:underline wavy #6a9a55;text-decoration-thickness:1px;text-underline-offset:2px">Raty</span>Dao</span><span class="kw">;</span></div><div class="m" style="left:0px;top:410px;width:34px;text-align:right;color:#606366">37</div><div class="m" style="left:0px;top:434px;width:34px;text-align:right;color:#606366">38</div><div class="m" style="left:105px;top:434px">    <span class="an" style="background:#44432d">@Autowired</span></div><div class="m" style="left:0px;top:458px;width:34px;text-align:right;color:#606366">39</div><div class="m" style="left:105px;top:458px">    <span class="kw">private </span>ReplyRatyDao <span class="fd">replyRatyDao</span><span class="kw">;</span></div><div class="m" style="left:0px;top:482px;width:34px;text-align:right;color:#606366">40</div><div class="m" style="left:0px;top:506px;width:34px;text-align:right;color:#606366">41</div><div class="m" style="left:0px;top:530px;width:34px;text-align:right;color:#606366">42</div><div class="m" style="left:105px;top:530px">    <span class="dc">/**</span></div><div class="m" style="left:0px;top:554px;width:34px;text-align:right;color:#606366">43</div><div class="m" style="left:105px;top:554px">    <span class="dc"> * </span><span class="dc"><span class="cj">评</span><span class="cj">价</span><span class="cj">回</span><span class="cj">复</span><span class="cj">添</span><span class="cj">加</span></span><span class="dc">/</span><span class="dc"><span class="cj">编</span><span class="cj">辑</span><span class="cj">操</span><span class="cj">作</span></span></div><div class="m" style="left:0px;top:578px;width:34px;text-align:right;color:#606366">44</div><div class="m" style="left:105px;top:578px">    <span class="dc"> * </span><span class="dc" style="font-weight:bold;text-decoration:underline">@param</span><span class="dc"> </span><span style="font-style:italic;color:#8a7048;background:#4b4634">reply<span style="text-decoration:underline wavy #6a9a55;text-decoration-thickness:1px;text-underline-offset:2px">Raty</span></span></div><div class="m" style="left:0px;top:602px;width:34px;text-align:right;color:#606366">45</div><div class="m" style="left:105px;top:602px">    <span class="dc"> * </span><span class="dc" style="font-weight:bold;text-decoration:underline;background:#4b4634">@return</span></div><div class="m" style="left:0px;top:626px;width:34px;text-align:right;color:#606366">46</div><div class="m" style="left:105px;top:626px">    <span class="dc"> */</span></div><div class="m" style="left:0px;top:650px;width:34px;text-align:right;color:#606366">47</div><div class="m" style="left:105px;top:650px">    <span class="kw">public </span>ReplyRaty <span class="fn">save</span>(ReplyRaty replyRaty)<span style="background:#3b3b3b"> { </span><span class="kw">return </span><span class="fd">replyRatyDao</span>.save(replyRaty)<span class="kw">;</span><span style="background:#3b3b3b"> }</span></div><div class="m" style="left:0px;top:674px;width:34px;text-align:right;color:#606366">50</div><div class="m" style="left:0px;top:698px;width:34px;text-align:right;color:#606366">51</div><div class="m" style="left:105px;top:698px">    <span class="dc">/**</span></div><div class="m" style="left:0px;top:722px;width:34px;text-align:right;color:#606366">52</div><div class="m" style="left:105px;top:722px">    <span class="dc"> * </span><span class="dc"><span class="cj">分</span><span class="cj">页</span><span class="cj">查</span><span class="cj">询</span><span class="cj">评</span><span class="cj">价</span><span class="cj">回</span><span class="cj">复</span><span class="cj">列</span><span class="cj">表</span></span></div><div class="m" style="left:0px;top:746px;width:34px;text-align:right;color:#606366">53</div><div class="m" style="left:105px;top:746px">    <span class="dc"> *</span></div><div class="m" style="left:0px;top:770px;width:34px;text-align:right;color:#606366">54</div><div class="m" style="left:105px;top:770px">    <span class="dc"> * </span><span class="dc" style="font-weight:bold;text-decoration:underline">@param</span><span class="dc"> </span><span style="font-style:italic;color:#8a7048;background:#4b4634">course<span style="text-decoration:underline wavy #6a9a55;text-decoration-thickness:1px;text-underline-offset:2px">Raty</span></span></div><div class="m" style="left:0px;top:794px;width:34px;text-align:right;color:#606366">55</div><div class="m" style="left:105px;top:794px">    <span class="dc"> * </span><span class="dc" style="font-weight:bold;text-decoration:underline">@param</span><span class="dc"> </span><span style="font-style:italic;color:#8a7048;background:#4b4634">pageBean</span></div><div class="m" style="left:0px;top:818px;width:34px;text-align:right;color:#606366">56</div><div class="m" style="left:105px;top:818px">    <span class="dc"> * </span><span class="dc" style="font-weight:bold;text-decoration:underline;background:#4b4634">@return</span></div><div class="m" style="left:0px;top:842px;width:34px;text-align:right;color:#606366">57</div><div class="m" style="left:105px;top:842px">    <span class="dc"> */</span></div><div class="m" style="left:0px;top:866px;width:34px;text-align:right;color:#606366">58</div><div class="m" style="left:105px;top:866px">    <span class="kw">public </span>PageBean&lt;ReplyRaty&gt; <span class="fn">findList</span>(ReplyRaty courseRaty, PageBean&lt;ReplyRaty&gt; pageBean) {</div></div><svg class="a" style="left:505px;top:163px" width="13" height="13"><rect x="0.5" y="0.5" width="11" height="11" fill="#313335" stroke="#6b6b6b"/><path d="M3 6H9M6 3V9" stroke="#7b7b7b"/></svg><svg class="a" style="left:505px;top:211px" width="13" height="15"><path d="M0.5 0.5H11.5V9L6 14L0.5 9Z" fill="#313335" stroke="#6b6b6b"/><path d="M3 6H9" stroke="#7b7b7b"/></svg><svg class="a" style="left:505px;top:280px" width="13" height="15"><path d="M0.5 14.5H11.5V6L6 1L0.5 6Z" fill="#313335" stroke="#6b6b6b"/><path d="M3 9H9" stroke="#7b7b7b"/></svg><svg class="a" style="left:505px;top:643px" width="13" height="15"><path d="M0.5 0.5H11.5V9L6 14L0.5 9Z" fill="#313335" stroke="#6b6b6b"/><path d="M3 6H9" stroke="#7b7b7b"/></svg><svg class="a" style="left:505px;top:736px" width="13" height="15"><path d="M0.5 14.5H11.5V6L6 1L0.5 6Z" fill="#313335" stroke="#6b6b6b"/><path d="M3 9H9" stroke="#7b7b7b"/></svg><svg class="a" style="left:505px;top:763px" width="13" height="13"><rect x="0.5" y="0.5" width="11" height="11" fill="#313335" stroke="#6b6b6b"/><path d="M3 6H9M6 3V9" stroke="#7b7b7b"/></svg><svg class="a" style="left:505px;top:811px" width="13" height="15"><path d="M0.5 0.5H11.5V9L6 14L0.5 9Z" fill="#313335" stroke="#6b6b6b"/><path d="M3 6H9" stroke="#7b7b7b"/></svg><svg class="a" style="left:505px;top:952px" width="13" height="15"><path d="M0.5 14.5H11.5V6L6 1L0.5 6Z" fill="#313335" stroke="#6b6b6b"/><path d="M3 9H9" stroke="#7b7b7b"/></svg><svg class="a" style="left:505px;top:979px" width="13" height="15"><path d="M0.5 0.5H11.5V9L6 14L0.5 9Z" fill="#313335" stroke="#6b6b6b"/><path d="M3 6H9" stroke="#7b7b7b"/></svg><div class="a" style="left:501px;top:254px;width:10px;height:22px;background:#2f4a5a"></div><svg class="a" style="left:456px;top:328px" width="20" height="20"><circle cx="8.5" cy="8" r="7.6" fill="#62ac4f"/><path d="M2.5 1.5L15 13" stroke="#1f3a1f" stroke-width="1.3"/><circle cx="13" cy="13.5" r="5.6" fill="#4594b8" stroke="#1e3140" stroke-width="1"/><path d="M14.8 11.6A2.5 2.5 0 1 0 14.8 15.4" fill="none" stroke="#103448" stroke-width="1.5"/></svg><svg class="a" style="left:456px;top:424px" width="20" height="20"><circle cx="8.5" cy="8" r="7.6" fill="#62ac4f"/><path d="M2.5 1.5L15 13" stroke="#1f3a1f" stroke-width="1.3"/><path d="M6.5 11H12V7.5L18.5 13L12 18.5V15H6.5Z" fill="#c5cad3" stroke="#1f2a33" stroke-width="0.8"/></svg><svg class="a" style="left:456px;top:496px" width="20" height="20"><circle cx="8.5" cy="8" r="7.6" fill="#62ac4f"/><path d="M2.5 1.5L15 13" stroke="#1f3a1f" stroke-width="1.3"/><path d="M6.5 11H12V7.5L18.5 13L12 18.5V15H6.5Z" fill="#c5cad3" stroke="#1f2a33" stroke-width="0.8"/></svg><svg class="a" style="left:456px;top:568px" width="20" height="20"><circle cx="8.5" cy="8" r="7.6" fill="#62ac4f"/><path d="M2.5 1.5L15 13" stroke="#1f3a1f" stroke-width="1.3"/><path d="M6.5 11H12V7.5L18.5 13L12 18.5V15H6.5Z" fill="#c5cad3" stroke="#1f2a33" stroke-width="0.8"/></svg><div class="a" style="left:1896px;top:111px;width:10px;height:10px;background:#e0a722"></div><div class="a" style="left:1899px;top:126px;width:8px;height:345px;background:#5b5d5f"></div><div class="a" style="left:1894px;top:478px;width:14px;height:125px;background:#746c58"></div><div class="a" style="left:1894px;top:144px;width:14px;height:2px;background:#c9a332"></div><div class="a" style="left:1894px;top:239px;width:14px;height:2px;background:#c9a332"></div><div class="a" style="left:1894px;top:249px;width:14px;height:2px;background:#c9a332"></div><div class="a" style="left:1894px;top:268px;width:14px;height:2px;background:#c9a332"></div><div class="a" style="left:1894px;top:297px;width:14px;height:2px;background:#c9a332"></div><div class="a" style="left:1894px;top:354px;width:14px;height:2px;background:#c9a332"></div><div class="a" style="left:1894px;top:364px;width:14px;height:2px;background:#c9a332"></div><div class="a" style="left:1894px;top:432px;width:14px;height:2px;background:#c9a332"></div><div class="a" style="left:1894px;top:441px;width:14px;height:2px;background:#c9a332"></div><div class="a" style="left:1894px;top:450px;width:14px;height:2px;background:#c9a332"></div><div class="a" style="left:1894px;top:477px;width:14px;height:2px;background:#c9a332"></div><div class="a" style="left:1894px;top:506px;width:14px;height:2px;background:#c9a332"></div><div class="a" style="left:1894px;top:670px;width:14px;height:2px;background:#c9a332"></div><div class="a" style="left:1894px;top:738px;width:14px;height:2px;background:#c9a332"></div><div class="a" style="left:1894px;top:794px;width:14px;height:2px;background:#c9a332"></div><div class="a" style="left:1894px;top:804px;width:14px;height:2px;background:#c9a332"></div><div class="a" style="left:1894px;top:899px;width:14px;height:2px;background:#c9a332"></div><div class="a" style="left:1890px;top:183px;width:2px;height:3px;background:#5b8fc0"></div><div class="a" style="left:512px;top:972px;width:1396px;height:10px;background:rgba(43,43,43,0.35)"></div><div class="a" style="left:519px;top:973px;width:1257px;height:8px;background:rgba(92,94,96,0.55)"></div><div class="a" style="left:1776px;top:973px;width:33px;height:8px;background:rgba(75,77,79,0.55)"></div><div class="a" style="left:414px;top:981px;width:1494px;height:25px;background:#323435"></div><div class="t" style="left:521px;top:987px;font-size:12.5px">ReplyRatyService</div><div class="a" style="left:1908px;top:83px;width:22px;height:923px;background:#3c3f41"></div><div class="t" style="left:1926px;top:110px;font-size:12px;line-height:14px;transform-origin:0 0;transform:rotate(90deg)">Ant Build</div><div class="t" style="left:1926px;top:197px;font-size:12px;line-height:14px;transform-origin:0 0;transform:rotate(90deg)">Database</div><div class="t" style="left:1926px;top:285px;font-size:12px;line-height:14px;transform-origin:0 0;transform:rotate(90deg)">Bean Validation</div><div class="t" style="left:1926px;top:405px;font-size:12px;line-height:14px;transform-origin:0 0;transform:rotate(90deg)">Maven</div><svg class="a" style="left:1913px;top:93px" width="12" height="12"><ellipse cx="6" cy="7" rx="3" ry="4.5" fill="#afb1b3"/><path d="M0 3L12 11M12 3L0 11M0 7H12" stroke="#afb1b3"/></svg><svg class="a" style="left:1913px;top:181px" width="12" height="13"><g fill="#afb1b3"><ellipse cx="6" cy="2.2" rx="5.5" ry="2.2"/><path d="M0.5 3.5A5.5 2.2 0 0 0 11.5 3.5V5.5A5.5 2.2 0 0 1 0.5 5.5Z"/><path d="M0.5 7A5.5 2.2 0 0 0 11.5 7V9A5.5 2.2 0 0 1 0.5 9Z"/><path d="M0.5 10.5A5.5 2.2 0 0 0 11.5 10.5V11A5.5 2.2 0 0 1 0.5 11Z"/></g></svg><svg class="a" style="left:1913px;top:269px" width="12" height="11"><circle cx="6" cy="5.5" r="5" fill="#afb1b3"/><path d="M3 5L6 8L10 2" stroke="#3c3f41" stroke-width="1.4" fill="none"/></svg><div class="t" style="left:1911px;top:387px;font-size:17px;line-height:16px;font-weight:bold;font-style:italic;color:#afb1b3">m</div><div class="a" style="left:10px;top:1006px;width:1920px;height:43px;background:#3c3f41"></div><div class="a" style="left:10px;top:1006px;width:1920px;height:1px;background:#4a4c4e"></div><svg class="a" style="left:43px;top:1013px" width="12" height="11"><path d="M0 1H2M0 5H2M0 9H2M4 1H12M4 5H12M4 9H12" stroke="#afb1b3" stroke-width="2"/></svg><div class="t" style="left:59px;top:1011px;font-size:12px"><u>6</u>: TODO</div><svg class="a" style="left:123px;top:1012px" width="14" height="13"><path d="M1 12C0 5 5 1 13 1C12 8 8 12 1 12Z" fill="#afb1b3"/><path d="M2 11L9 5" stroke="#3c3f41" stroke-width="1"/></svg><div class="t" style="left:141px;top:1011px;font-size:12px">Spring</div><svg class="a" style="left:196px;top:1012px" width="12" height="12"><rect width="12" height="12" fill="#afb1b3"/><path d="M2 3L5 5.5L2 8" stroke="#3c3f41" stroke-width="1.3" fill="none"/><path d="M6 9H10" stroke="#3c3f41" stroke-width="1.3"/></svg><div class="t" style="left:212px;top:1011px;font-size:12px">Terminal</div><svg class="a" style="left:279px;top:1011px" width="14" height="14"><rect x="0.5" y="0.5" width="10" height="10" fill="none" stroke="#afb1b3"/><rect x="0" y="0" width="11" height="3" fill="#afb1b3"/><rect x="5" y="5" width="9" height="9" fill="#afb1b3" stroke="#3c3f41"/><path d="M7 8H12M7 11H12" stroke="#3c3f41"/></svg><div class="t" style="left:295px;top:1011px;font-size:12px">Java Enterprise</div><svg class="a" style="left:20px;top:1034px" width="13" height="13"><rect x="3.5" y="0.5" width="9" height="9" fill="none" stroke="#afb1b3"/><path d="M0.5 3V12.5H10" fill="none" stroke="#afb1b3"/></svg><div class="t" style="left:41px;top:1032px;font-size:13.2px">Invalid Maven home directory configured // G:/apache-maven-3.6.1 // Bundled maven 3.3.9 will be used.  Configure Maven home.  (2 minutes ago)</div><div class="t" style="left:1642px;top:1032px;font-size:12px">29:14</div><div class="t" style="left:1684px;top:1032px;font-size:12px">CRLF</div><div class="t" style="left:1733px;top:1032px;font-size:12px">UTF-8</div><div class="t" style="left:1788px;top:1032px;font-size:12px">4 spaces</div><svg class="a" style="left:1717px;top:1035px" width="6" height="10"><path d="M0.5 3.5L3 0.5L5.5 3.5ZM0.5 5.5L3 8.5L5.5 5.5Z" fill="#afb1b3"/></svg><svg class="a" style="left:1772px;top:1035px" width="6" height="10"><path d="M0.5 3.5L3 0.5L5.5 3.5ZM0.5 5.5L3 8.5L5.5 5.5Z" fill="#afb1b3"/></svg><svg class="a" style="left:1844px;top:1035px" width="6" height="10"><path d="M0.5 3.5L3 0.5L5.5 3.5ZM0.5 5.5L3 8.5L5.5 5.5Z" fill="#afb1b3"/></svg><svg class="a" style="left:1861px;top:1033px" width="12" height="13"><path d="M1.5 6V3.5A2.5 2.5 0 0 1 6.5 3.5" fill="none" stroke="#afb1b3" stroke-width="1.5"/><rect x="3" y="6" width="9" height="7" fill="#afb1b3"/></svg><svg class="a" style="left:1886px;top:1033px" width="13" height="14"><rect x="0.5" y="0.5" width="12" height="13" fill="none" stroke="#5e6061"/><path d="M2 4H11M2 7H11M2 10H11" stroke="#5e6061"/></svg><svg class="a" style="left:1909px;top:1031px" width="13" height="16"><circle cx="6.5" cy="5" r="4.3" fill="none" stroke="#afb1b3" stroke-width="1.2"/><path d="M1 4H12" stroke="#afb1b3" stroke-width="1.5"/><path d="M3 10L1 15H12L10 10" fill="none" stroke="#afb1b3" stroke-width="1.2"/><circle cx="5" cy="6" r="0.8" fill="#afb1b3"/><circle cx="8" cy="6" r="0.8" fill="#afb1b3"/></svg><div class="a" style="left:1757px;top:868px;width:172px;height:23px;background:#f7f8fa"></div><svg class="a" style="left:1742px;top:863px" width="32" height="32"><g transform="rotate(-14 16 16)"><rect x="3" y="3" width="26" height="26" rx="6" fill="#ee6a2a"/><path d="M21 10C18 7.5 11 8 11.5 12C12 15.5 21 14.5 21 19C21 23 13 23.5 10 21" fill="none" stroke="#fff" stroke-width="3.6"/></g></svg><div class="t" style="left:1777px;top:870px;font-size:16px;line-height:18px;color:#1a6fd8;font-weight:bold">中</div><svg class="a" style="left:1802px;top:872px" width="12" height="14"><path d="M8 0A7 7 0 1 0 12 11A6 6 0 0 1 8 0Z" fill="#1a6fd8"/></svg><div class="t" style="left:1823px;top:868px;font-size:16px;line-height:18px;color:#1a6fd8;font-weight:bold">°,</div><svg class="a" style="left:1843px;top:873px" width="17" height="12"><rect x="0.8" y="0.8" width="15.4" height="10.4" rx="1" fill="none" stroke="#1a6fd8" stroke-width="1.6"/><path d="M3 4H14M3 6.5H14M5 9H12" stroke="#1a6fd8" stroke-width="1.2" stroke-dasharray="1.5 1"/></svg><svg class="a" style="left:1867px;top:872px" width="13" height="14"><circle cx="6.5" cy="4" r="3" fill="#c9ced6"/><rect x="1" y="8" width="11" height="6" fill="#d5d9df"/></svg><svg class="a" style="left:1887px;top:872px" width="16" height="14"><path d="M5 0L1 2L0 6L3 6.5V14H13V6.5L16 6L15 2L11 0C10 2 6 2 5 0Z" fill="#1a6fd8"/></svg><svg class="a" style="left:1909px;top:871px" width="15" height="15"><path d="M2 13L8 7" stroke="#1a6fd8" stroke-width="3" stroke-linecap="round"/><circle cx="10" cy="5" r="4" fill="#1a6fd8"/><path d="M10 5L15 0" stroke="#f7f8fa" stroke-width="3"/></svg><svg class="a" style="left:1758px;top:860px" width="160" height="154" viewBox="0 0 160 154"><g opacity="0.9"><ellipse cx="80" cy="76" rx="72" ry="70.5" fill="none" stroke="#e3151a" stroke-width="4"/><ellipse cx="80" cy="76" rx="66" ry="64.5" fill="none" stroke="#d8353a" stroke-width="2.2"/><g transform="translate(12 4)"><path d="M80 30L81 25" stroke="#d0161b" stroke-width="1.5" fill="none"/><path d="M80 31C69 28 68 47 80 50C92 47 91 28 80 31Z" fill="#d0161b"/><path d="M75 38H78M82 38H85M76 43Q80 46 84 43" stroke="#2b2b2b" stroke-width="1.3" fill="none"/></g><text x="46" y="52" font-family="Liberation Sans" font-size="9.5" font-weight="bold" fill="#d0161b" transform="rotate(20 46 52)">www.yuanlrc.com</text><text x="22" y="76" font-size="26" font-weight="bold" fill="#d8161b" transform="rotate(20 22 74)" font-family="Liberation Serif">猿来入此</text><text x="50" y="122" font-size="19" font-weight="bold" fill="#d0161b" transform="rotate(18 50 122)" font-family="Liberation Serif">出品</text></g></svg><div class="t" style="left:1764px;top:1014px;font-size:17px;line-height:20px;color:rgba(225,30,35,0.8);font-weight:bold"><span style="display:inline-block;width:18.6px;text-align:center">【</span><span style="display:inline-block;width:18.6px;text-align:center">时</span><span style="display:inline-block;width:18.6px;text-align:center">索</span><span style="display:inline-block;width:18.6px;text-align:center">技</span><span style="display:inline-block;width:18.6px;text-align:center">术</span><span style="display:inline-block;width:18.6px;text-align:center">实</span><span style="display:inline-block;width:18.6px;text-align:center">现</span><span style="display:inline-block;width:18.6px;text-align:center">】</span></div><div class="t" style="left:1585px;top:1004px;font-size:26px;line-height:30px;color:#e6e6e6;text-shadow:1px 1px 1px #000,0 0 2px rgba(0,0,0,0.6)"><span style="display:inline-block;width:24.6px">掘</span><span style="display:inline-block;width:24.6px">金</span><span style="display:inline-block;width:24.6px">技</span><span style="display:inline-block;width:24.6px">术</span><span style="display:inline-block;width:24.6px">社</span><span style="display:inline-block;width:24.6px">区</span><span style="display:inline-block;width:8px"></span>@115432031q</div></body></html>
